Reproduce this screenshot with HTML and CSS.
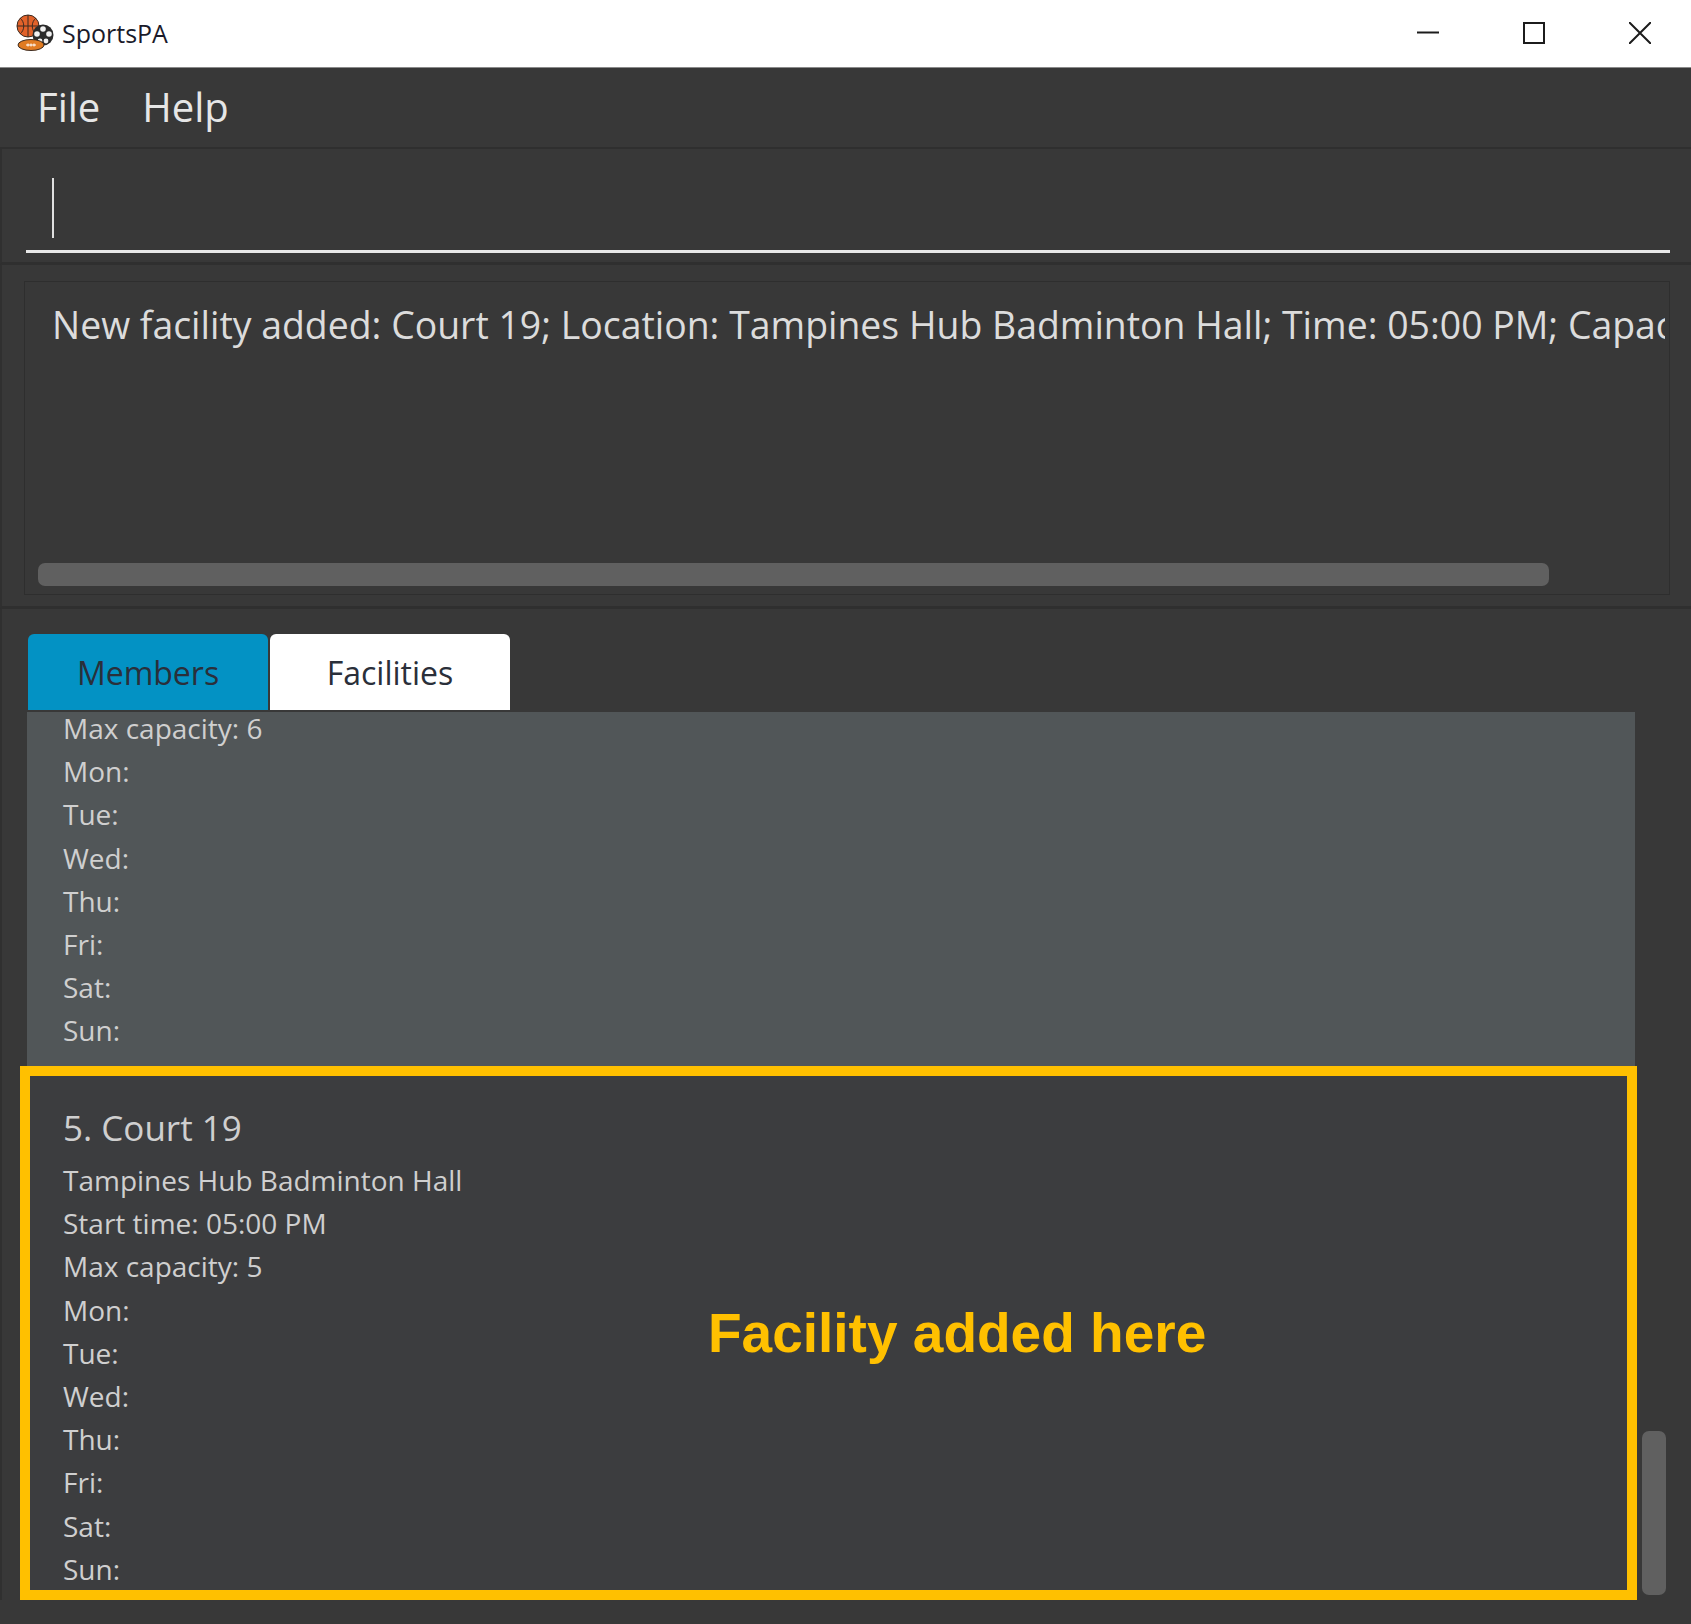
FILE: index.html
```html
<!DOCTYPE html>
<html lang="en">
<head>
    <meta charset="UTF-8">
    <title>SportsPA</title>
    <link rel="stylesheet" href="styles.css">
</head>
<body>
    <div class="title-bar">
        <svg class="app-icon" viewBox="0 0 38 38">
            <circle cx="12" cy="12" r="11" fill="#e2622a" stroke="#3a2a20" stroke-width="1"/>
            <path d="M12 1v22M1 12h22M4 4c5 4 5 12 0 16M20 4c-5 4-5 12 0 16" fill="none" stroke="#3a2a20" stroke-width="1"/>
            <circle cx="27" cy="21" r="10.500" fill="#2b2b2b"/>
            <circle cx="27" cy="15" r="2.800" fill="#f2f2f2"/>
            <circle cx="21" cy="20" r="2.800" fill="#f2f2f2"/>
            <circle cx="33" cy="20" r="2.800" fill="#f2f2f2"/>
            <circle cx="24" cy="27" r="2.400" fill="#f2f2f2"/>
            <circle cx="30" cy="27" r="2.400" fill="#f2f2f2"/>
            <ellipse cx="15" cy="31" rx="13" ry="5.500" fill="#e07b22" stroke="#3a2a20" stroke-width="1"/>
            <path d="M10 31h10M12 29.500v3M15 29.500v3M18 29.500v3" fill="none" stroke="#fff" stroke-width="1"/>
        </svg>
        <span class="app-name">SportsPA</span>
        <div class="window-buttons">
            <svg viewBox="0 0 22 22"><path d="M0 10.500h22" /></svg>
            <svg viewBox="0 0 22 22"><path d="M1 1h20v20h-20z" /></svg>
            <svg viewBox="0 0 22 22"><path d="M0 0l22 22M22 0l-22 22" /></svg>
        </div>
    </div>

    <div class="menu-bar">
        <span>File</span>
        <span>Help</span>
    </div>

    <div class="command-pane">
        <div class="command-box"><div class="caret"></div></div>
    </div>

    <div class="result-pane">
        <div class="result-box">
            <div class="result-text">New facility added: Court 19; Location: Tampines Hub Badminton Hall; Time: 05:00 PM; Capacity: 5</div>
            <div class="h-scroll"></div>
        </div>
    </div>

    <div class="list-pane">
        <div class="tabs">
            <div class="tab tab-members">Members</div>
            <div class="tab tab-facilities">Facilities</div>
        </div>
        <div class="list-row">
            <div class="list">
                <div class="card card-alt">
                    <div class="line">Max capacity: 6</div>
                    <div class="line">Mon:</div>
                    <div class="line">Tue:</div>
                    <div class="line">Wed:</div>
                    <div class="line">Thu:</div>
                    <div class="line">Fri:</div>
                    <div class="line">Sat:</div>
                    <div class="line">Sun:</div>
                </div>
                <div class="card card-new">
                    <div class="card-title">5. Court 19</div>
                    <div class="line">Tampines Hub Badminton Hall</div>
                    <div class="line">Start time: 05:00 PM</div>
                    <div class="line">Max capacity: 5</div>
                    <div class="line">Mon:</div>
                    <div class="line">Tue:</div>
                    <div class="line">Wed:</div>
                    <div class="line">Thu:</div>
                    <div class="line">Fri:</div>
                    <div class="line">Sat:</div>
                    <div class="line">Sun:</div>
                </div>
            </div>
            <div class="v-scroll"></div>
            <div class="highlight"></div>
            <div class="note">Facility added here</div>
        </div>
    </div>
</body>
</html>
```

FILE: styles.css
```css
html, body {
    margin: 0;
    height: 1624px;
    overflow: hidden;
}
body {
    font-family: "Open Sans", "Noto Sans", sans-serif;
    background-color: #383838;
    color: #cfcfcf;
}

/* title bar */
.title-bar {
    height: 68px;
    background-color: #fff;
    border-bottom: 1px solid #8a8a8a;
    box-sizing: border-box;
    display: flex;
    align-items: center;
    padding: 0 0 2px 16px;
}
.app-icon {
    width: 38px;
    height: 38px;
}
.app-name {
    margin-left: 8px;
    font-size: 25px;
    color: #1a1a2a;
}
.window-buttons {
    margin-left: auto;
    display: flex;
    gap: 84px;
    padding-right: 40px;
}
.window-buttons svg {
    width: 22px;
    height: 22px;
    display: block;
}
.window-buttons path {
    fill: none;
    stroke: #1c1c1c;
    stroke-width: 2;
}

/* menu */
.menu-bar {
    height: 81px;
    box-sizing: border-box;
    border-bottom: 2px solid #2f2f2f;
    display: flex;
    align-items: center;
    gap: 42px;
    padding: 0 0 3px 37px;
    font-size: 40px;
    color: #e6e6e6;
}

/* command box */
.command-pane {
    height: 116px;
    box-sizing: border-box;
    border-bottom: 3px solid #2f2f2f;
    border-left: 2px solid #303030;
    padding: 0 21px 0 24px;
}
.command-box {
    height: 104px;
    box-sizing: border-box;
    border-bottom: 3px solid #e8e8e8;
    padding: 29px 0 0 26px;
}
.caret {
    width: 2px;
    height: 60px;
    background-color: #e0e0e0;
}

/* result box */
.result-pane {
    height: 344px;
    box-sizing: border-box;
    border-bottom: 3px solid #2f2f2f;
    border-left: 2px solid #303030;
    padding: 16px 21px 0 22px;
}
.result-box {
    height: 314px;
    box-sizing: border-box;
    border: 1px solid #2e2e2e;
    padding: 0 0 8px 13px;
    display: flex;
    flex-direction: column;
    justify-content: space-between;
}
.result-text {
    margin: 17px 4px 0 14px;
    font-size: 37.4px;
    line-height: 52px;
    color: #dcdcdc;
    white-space: nowrap;
    overflow: hidden;
}
.h-scroll {
    width: 1511px;
    height: 23px;
    background-color: #606060;
    border-radius: 7px;
}

/* tabs and list */
.list-pane {
    padding: 25px 0 0 25px;
    border-left: 2px solid #303030;
}
.tabs {
    display: flex;
    gap: 2px;
    height: 76px;
    padding-left: 1px;
}
.tab {
    width: 240px;
    border-radius: 6px 6px 0 0;
    display: flex;
    align-items: center;
    justify-content: center;
    font-size: 32px;
    color: #2a2f3a;
}
.tab-members {
    background-color: #0392c4;
}
.tab-facilities {
    background-color: #fff;
}
.list-row {
    position: relative;
    margin-top: 2px;
    display: flex;
    align-items: flex-end;
}
.list {
    width: 1608px;
    height: 888px;
    overflow: hidden;
}
.card {
    padding-left: 36px;
}
.card-alt {
    height: 359px;
    margin-top: -5px;
    box-sizing: border-box;
    background-color: #515658;
}
.card-new {
    height: 534px;
    box-sizing: border-box;
    background-color: #3c3d3f;
    padding-top: 31px;
}
.line {
    font-size: 28px;
    line-height: 43.2px;
}
.card-title {
    font-size: 35px;
    line-height: 62px;
}
.highlight {
    position: absolute;
    left: -7px;
    top: 354px;
    width: 1617px;
    height: 534px;
    box-sizing: border-box;
    border: 10px solid #ffc000;
}
.note {
    position: absolute;
    left: 681px;
    top: 589px;
    font-family: "Liberation Sans", Arial, sans-serif;
    font-weight: bold;
    font-size: 55px;
    color: #ffc000;
}
.v-scroll {
    width: 24px;
    height: 164px;
    margin: 0 0 5px 7px;
    background-color: #606060;
    border-radius: 7px;
}
```
